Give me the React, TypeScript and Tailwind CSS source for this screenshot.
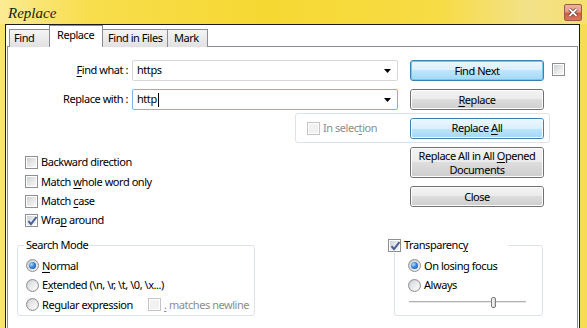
import React from "react";

type CheckProps = { checked?: boolean; disabled?: boolean };

const Check = ({ checked = false, disabled = false }: CheckProps) => (
  <span
    className={`relative flex h-[13px] w-[13px] shrink-0 items-center justify-center border bg-white ${
      disabled ? "border-[#c4c4c4]" : "border-[#8f8f8f]"
    }`}
  >
    <span
      className={`h-[9px] w-[9px] ${
        disabled
          ? "bg-[#f1f1f1]"
          : "bg-[linear-gradient(135deg,#cdd0d4_0%,#e6e7e9_50%,#f7f7f7_100%)]"
      }`}
    />
    {checked && (
      <svg className="absolute left-[1px] top-[1px]" width="11" height="10" viewBox="0 0 11 10">
        <path d="M1.5 5.2 L4 8.2 L9.5 1" fill="none" stroke="#4a5f97" strokeWidth="2" />
      </svg>
    )}
  </span>
);

const Radio = ({ checked = false }: { checked?: boolean }) => (
  <span className="flex h-[13px] w-[13px] shrink-0 items-center justify-center rounded-full border border-[#8f8f8f] bg-[linear-gradient(135deg,#c9ccd1_0%,#f4f4f4_100%)]">
    {checked ? (
      <span className="h-[7px] w-[7px] rounded-full bg-[radial-gradient(circle_at_35%_35%,#b6dcfb_0%,#3b86d9_45%,#12479e_100%)]" />
    ) : (
      <span className="h-[9px] w-[9px] rounded-full bg-[linear-gradient(135deg,#d7dadd_0%,#fbfbfb_100%)]" />
    )}
  </span>
);

type BtnProps = { children: React.ReactNode; tone?: "plain" | "focus" | "hover"; tall?: boolean };

const Btn = ({ children, tone = "plain", tall = false }: BtnProps) => (
  <div
    className={`w-[134px] rounded-[3px] border ${tall ? "h-[31px]" : "h-[21px]"} ${
      tone === "plain" ? "border-[#707070]" : "border-[#3c7fb1]"
    } ${tone === "focus" ? "shadow-[inset_0_0_0_1px_#5fc3f3]" : ""}`}
  >
    <div
      className={`flex h-full w-full flex-col items-center justify-center rounded-[2px] border leading-[14px] ${
        tone === "plain"
          ? "border-[#fcfcfc] bg-[linear-gradient(to_bottom,#f2f2f2_0%,#ebebeb_50%,#dddddd_50%,#cfcfcf_100%)]"
          : tone === "focus"
          ? "border-[#6fcaf4] bg-[linear-gradient(to_bottom,#eaf6fd_0%,#d9f0fc_50%,#bee6fd_50%,#a7d9f5_100%)]"
          : "border-[#f4fbfe] bg-[linear-gradient(to_bottom,#eaf6fd_0%,#d9f0fc_50%,#bee6fd_50%,#a7d9f5_100%)]"
      }`}
    >
      {children}
    </div>
  </div>
);

const U = ({ children }: { children: React.ReactNode }) => <span className="underline underline-offset-[2px]">{children}</span>;

const Combo = ({ value, focused = false }: { value: string; focused?: boolean }) => (
  <div
    className={`ml-[4px] flex h-[21px] w-[266px] items-center rounded-[2px] border bg-white pl-[4px] pr-[6px] ${
      focused ? "border-[#7eb4ea]" : "border-[#d5d8dc]"
    }`}
  >
    <span className="flex items-center">
      {value}
      {focused && <span className="ml-[1px] h-[14px] w-[1px] bg-black" />}
    </span>
    <svg className="ml-auto" width="7" height="4" viewBox="0 0 7 4">
      <path d="M0 0 H7 L3.5 4 Z" fill="#000" />
    </svg>
  </div>
);

const CheckRow = ({ checked, children }: { checked?: boolean; children: React.ReactNode }) => (
  <div className="flex h-[19.33px] items-center gap-[3px]">
    <Check checked={checked} />
    <span>{children}</span>
  </div>
);

const RadioRow = ({ checked, children }: { checked?: boolean; children: React.ReactNode }) => (
  <div className="flex h-[19.5px] items-center gap-[3px]">
    <Radio checked={checked} />
    <span>{children}</span>
  </div>
);

export default function App() {
  return (
    <div className="flex h-[328px] w-[587px] flex-col overflow-hidden whitespace-nowrap bg-[linear-gradient(to_right,#f8e56a_0%,#f6d936_20%,#f5d52c_60%,#f3df6e_90%,#f5dc52_100%)] font-['Noto_Sans',sans-serif] text-[11px] tracking-[-0.45px] text-black">
      {/* title bar */}
      <div className="flex h-[24px] shrink-0 bg-[linear-gradient(to_right,#fbeb93_0%,#f8de4d_15%,#f6d832_45%,#f7dc45_75%,#f2e189_90%,#f6e070_100%)]">
        <span className="ml-[8px] mt-[2px] font-['Liberation_Serif',serif] text-[15px] italic tracking-normal text-[#1c1c1c]">
          Replace
        </span>
        <div className="ml-auto mr-[5px] mt-[4px] flex h-[17px] w-[18px] items-center justify-center rounded-[2px] border border-[#9c5a45] bg-[linear-gradient(to_bottom,#eeb2a3_0%,#e39a86_45%,#cd5d3d_55%,#d9785d_100%)]">
          <svg width="10" height="9" viewBox="0 0 10 9">
            <path d="M1.5 1 L8.5 8 M8.5 1 L1.5 8" stroke="#5b2a1e" strokeWidth="3.2" />
            <path d="M1.5 1 L8.5 8 M8.5 1 L1.5 8" stroke="#fff" strokeWidth="1.8" />
          </svg>
        </div>
      </div>

      {/* client area */}
      <div className="ml-[5px] mr-[7px] flex flex-1 flex-col border-x border-t border-[#1b1b1b] bg-white">
        {/* tabs */}
        <div className="relative z-10 -mb-[1px] flex h-[22px] items-end">
          <div className="ml-[3px] flex h-[18px] w-[41px] items-center border border-b-0 border-[#898c95] bg-[linear-gradient(to_bottom,#f4f4f4,#e1e1e1)] pl-[4px]">
            Find
          </div>
          <div className="-ml-[1px] flex h-[22px] w-[54px] items-center border border-b-0 border-[#898c95] bg-white pb-[3px] pl-[7px]">
            Replace
          </div>
          <div className="-ml-[1px] flex h-[18px] w-[66px] items-center border border-b-0 border-[#898c95] bg-[linear-gradient(to_bottom,#f4f4f4,#e1e1e1)] pl-[5px]">
            Find in Files
          </div>
          <div className="-ml-[1px] flex h-[18px] w-[41px] items-center border border-b-0 border-[#898c95] bg-[linear-gradient(to_bottom,#f4f4f4,#e1e1e1)] pl-[6px]">
            Mark
          </div>
        </div>

        {/* tab panel */}
        <div className="ml-[1px] mr-[1px] flex flex-1 flex-col border-x border-t border-[#898c95]">
          {/* find / replace fields */}
          <div className="mt-[13px] flex items-start">
            <div className="flex flex-col gap-[8px]">
              <div className="flex items-center">
                <span className="w-[120px] text-right">
                  <U>F</U>ind what :
                </span>
                <Combo value="https" />
              </div>
              <div className="flex items-center">
                <span className="w-[120px] text-right">Replace with :</span>
                <Combo value="http" focused />
              </div>
            </div>
            <div className="ml-[12px] flex flex-col gap-[8px]">
              <Btn tone="focus">Find Next</Btn>
              <Btn>
                <span>
                  <U>R</U>eplace
                </span>
              </Btn>
            </div>
            <div className="ml-[8px] mt-[3px]">
              <Check />
            </div>
          </div>

          {/* in selection */}
          <div className="ml-[287px] mt-[3px] flex h-[30px] w-[255px] items-center rounded-[3px] border border-[#dce3ea]">
            <div className="ml-[11px]">
              <Check disabled />
            </div>
            <span className="ml-[3px] text-[#8d8d8d]">
              In selec<U>t</U>ion
            </span>
            <div className="ml-auto mr-[5px]">
              <Btn tone="hover">
                <span>
                  Replace <U>A</U>ll
                </span>
              </Btn>
            </div>
          </div>

          {/* options + buttons */}
          <div className="flex h-[92px]">
            <div className="ml-[17px] mt-[10px] flex w-[385px] flex-col">
              <CheckRow>Backward direction</CheckRow>
              <CheckRow>
                Match <U>w</U>hole word only
              </CheckRow>
              <CheckRow>
                Match <U>c</U>ase
              </CheckRow>
              <CheckRow checked>
                Wra<U>p</U> around
              </CheckRow>
            </div>
            <div className="mt-[4px] flex flex-col gap-[8px]">
              <Btn tall>
                <span>
                  Replace All in All <U>O</U>pened
                </span>
                <span>Documents</span>
              </Btn>
              <Btn>Close</Btn>
            </div>
          </div>

          {/* search mode + transparency */}
          <div className="flex items-start">
            <fieldset className="ml-[9px] mt-[2px] h-[79px] w-[238px] min-w-0 shrink-0 rounded-[3px] border border-[#dce3ea] pl-[8px]">
              <legend className="ml-[-2px] px-[2px] leading-[16px]">Search Mode</legend>
              <div className="flex flex-col pt-[3px]">
                <RadioRow checked>
                  <U>N</U>ormal
                </RadioRow>
                <RadioRow>
                  E<U>x</U>tended (\n, \r, \t, \0, \x...)
                </RadioRow>
                <div className="flex h-[19.5px] items-center gap-[3px]">
                  <Radio />
                  <span className="w-[103px] shrink-0">
                    Re<U>g</U>ular expression
                  </span>
                  <Check disabled />
                  <span className="shrink-0 text-[#8d8d8d]">
                    <U>.</U> matches newline
                  </span>
                </div>
              </div>
            </fieldset>

            <fieldset className="ml-[139px] mt-[2px] h-[79px] w-[149px] min-w-0 shrink-0 rounded-[3px] border border-[#dce3ea] pl-[13px]">
              <legend className="-ml-[20px] flex w-[120px] items-center gap-[3px] leading-[16px]">
                <Check checked />
                <span>
                  Transparenc<U>y</U>
                </span>
              </legend>
              <div className="flex flex-col pt-[3px]">
                <RadioRow checked>On losing focus</RadioRow>
                <RadioRow>Always</RadioRow>
                <div className="relative ml-[1px] mt-[6px] h-[2px] w-[117px] border-t border-[#b0b0b0] bg-[#e7eaea]">
                  <div className="absolute left-[82px] top-[-5px] h-[11px] w-[5px] rounded-[2px] border border-[#7b7b7b] bg-[linear-gradient(to_right,#f7f7f7,#d9d9d9)]" />
                </div>
              </div>
            </fieldset>
          </div>
        </div>
      </div>
    </div>
  );
}
